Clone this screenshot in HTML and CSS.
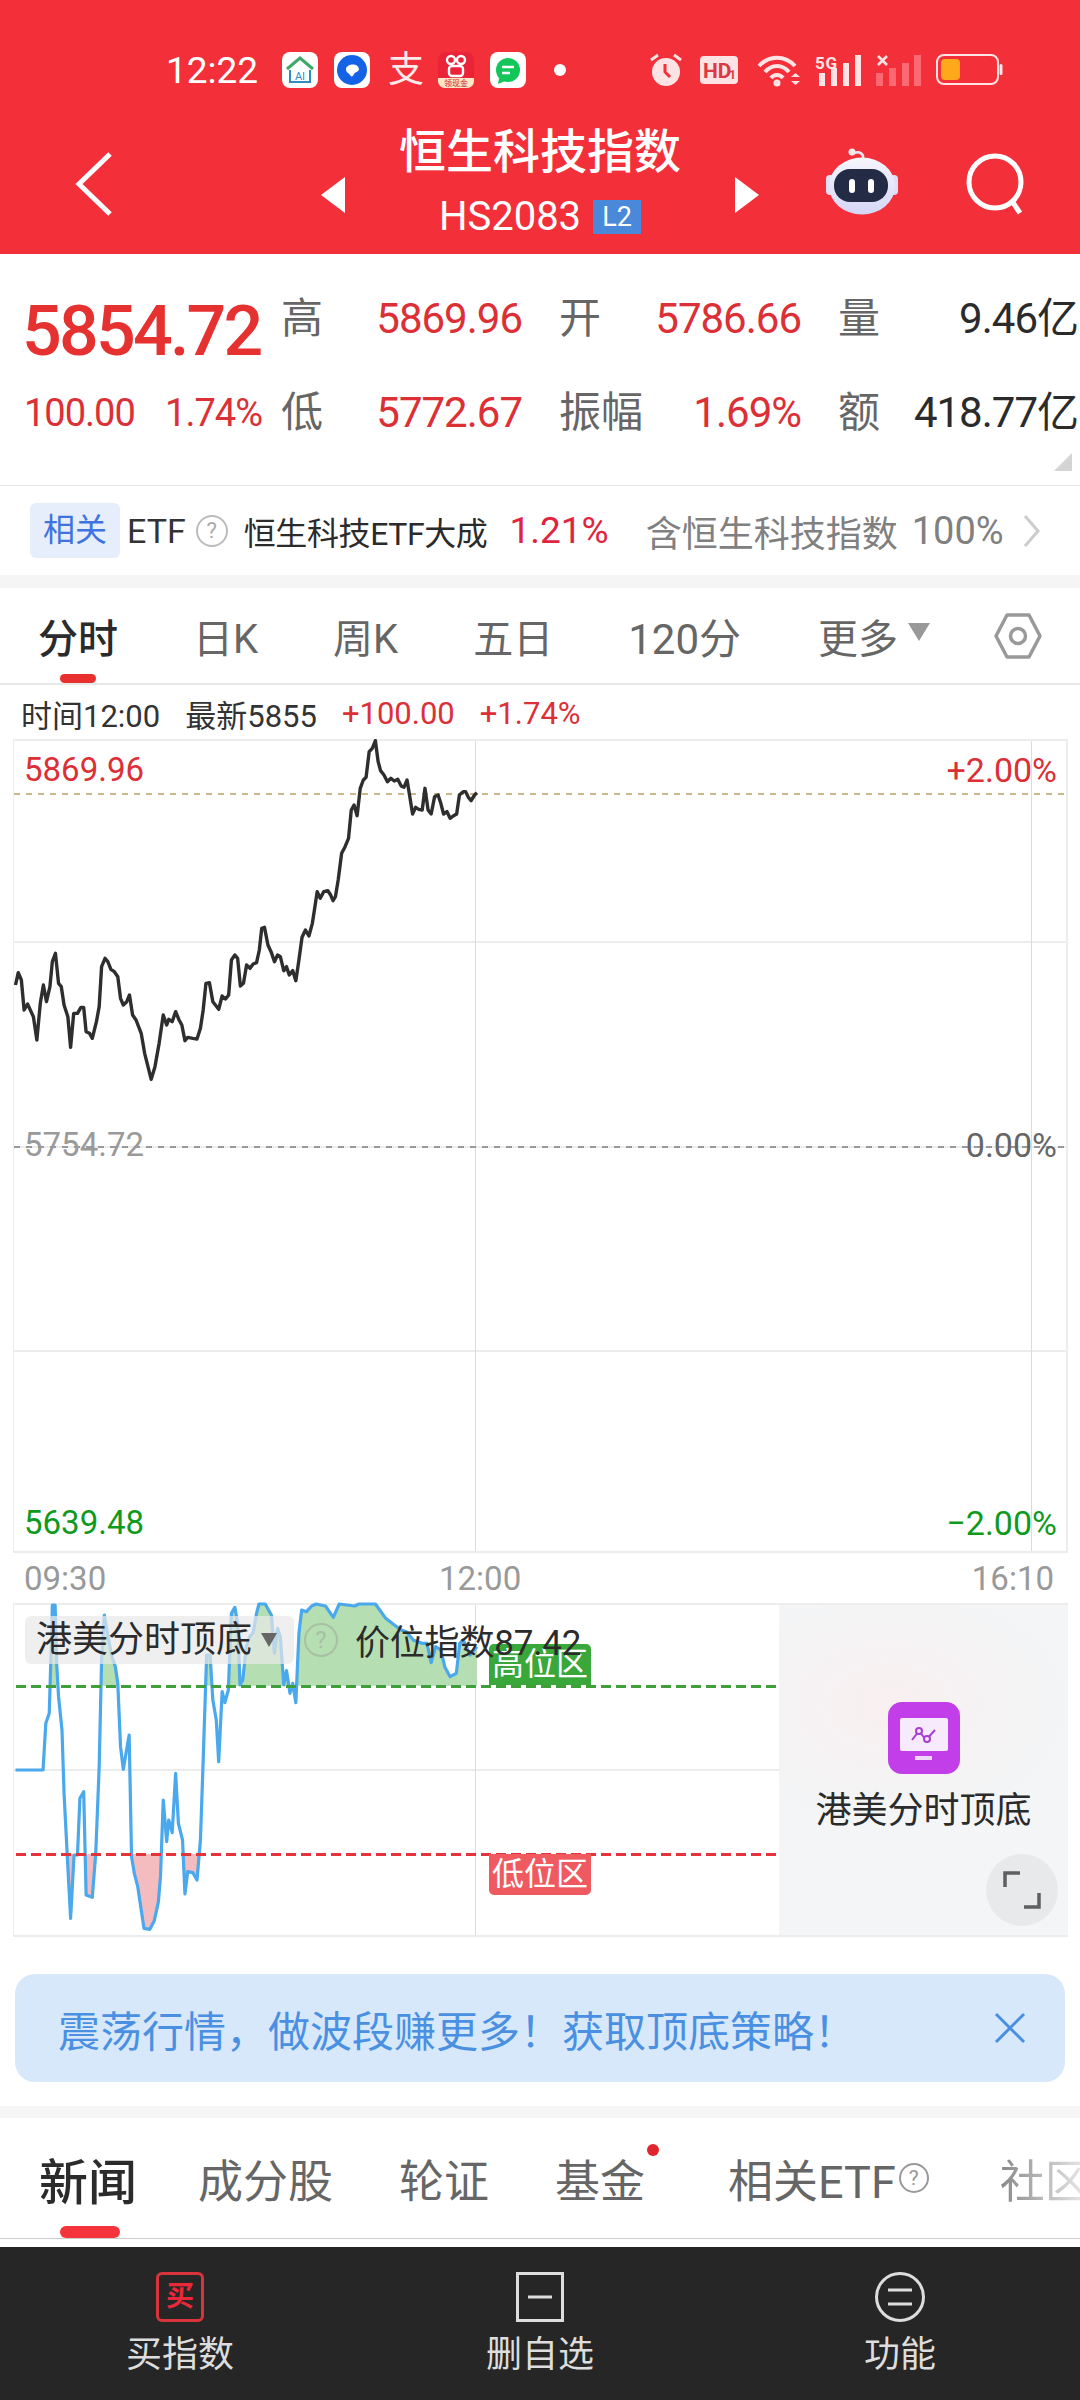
FILE: index.html
```html
<!DOCTYPE html>
<html lang="zh-CN">
<head>
  <meta charset="UTF-8" />
  <meta name="viewport" content="width=device-width, initial-scale=1.0"/>
  <title>恒生科技指数</title>
  <link rel="stylesheet" href="styles.css">
</head>
<body>
  <div class="header">
    <div class="status-bar">
      <span class="status-time">12:22</span>
      <!-- AI home -->
      <svg class="app-icon" width="36" height="36" viewBox="0 0 36 36">
        <rect width="36" height="36" rx="8" fill="#fff"/>
        <path d="M5 17L18 6L31 17" fill="none" stroke="#3fa86b" stroke-width="3"/>
        <path d="M8 18V30H28V18" fill="none" stroke="#2b8fc4" stroke-width="2"/>
        <text x="18" y="28" font-size="11" text-anchor="middle" fill="#2b8fc4" font-family="Roboto">AI</text>
      </svg>
      <!-- Blue browser -->
      <svg class="app-icon" width="36" height="36" viewBox="0 0 36 36">
        <rect width="36" height="36" rx="8" fill="#fff"/>
        <circle cx="18" cy="18" r="15" fill="#1463e6"/>
        <path d="M12 17C12 12 24 10 25 17C25 20 21 20 20 22C19 25 17 25 16 23C15 21 12 21 12 17Z" fill="#fff"/>
      </svg>
      <span class="status-alipay">支</span>
      <!-- Red video app -->
      <svg class="app-icon" width="36" height="36" viewBox="0 0 36 36">
        <rect width="36" height="36" rx="8" fill="#ea2338"/>
        <circle cx="13" cy="8" r="4" fill="none" stroke="#fff" stroke-width="2.4"/>
        <circle cx="23" cy="8" r="4" fill="none" stroke="#fff" stroke-width="2.4"/>
        <rect x="11" y="14" width="14" height="10" rx="3" fill="none" stroke="#fff" stroke-width="2.4"/>
        <path d="M0 26H36V29C36 33 33 36 29 36H7C3 36 0 33 0 29Z" fill="#fde7c4"/>
        <text x="18" y="34" font-size="8" text-anchor="middle" fill="#c7202f" font-family="Noto Sans CJK SC">领现金</text>
      </svg>
      <!-- Green message -->
      <svg class="app-icon" width="36" height="36" viewBox="0 0 36 36">
        <rect width="36" height="36" rx="8" fill="#fff"/>
        <circle cx="18" cy="18" r="12" fill="#13c65a"/>
        <path d="M9 26L8 32L15 29Z" fill="#13c65a"/>
        <path d="M12 15H24M12 21H20" stroke="#fff" stroke-width="2.4"/>
      </svg>
      <span class="status-dot"></span>
      <!-- Alarm -->
      <svg class="status-alarm" width="32" height="34" viewBox="0 0 32 34">
        <circle cx="16" cy="19" r="14" fill="#fde3e3"/>
        <path d="M1 7L8 2M31 7L24 2" stroke="#fde3e3" stroke-width="3"/>
        <path d="M15 11V19L20 24" fill="none" stroke="#f3303a" stroke-width="3"/>
      </svg>
      <svg class="status-hd" width="38" height="28" viewBox="0 0 38 28">
        <rect width="38" height="28" rx="4" fill="#fde3e3"/>
        <text x="3" y="22" font-size="21" font-weight="700" fill="#d93a44" font-family="Roboto">HD</text>
        <text x="29" y="23" font-size="12" font-weight="700" fill="#d93a44" font-family="Roboto">1</text>
      </svg>
      <!-- Wifi -->
      <svg class="status-wifi" width="44" height="34" viewBox="0 0 44 34">
        <path d="M2 13C12 2 28 2 38 13M8 19C15 11 25 11 32 19M14 25C17 21 23 21 26 25" fill="none" stroke="#fde3e3" stroke-width="4"/>
        <circle cx="20" cy="30" r="3.5" fill="#fde3e3"/>
        <path d="M34 24L38.500 20L43 24ZM34 28H43L38.500 32Z" fill="#fde3e3"/>
      </svg>
      <!-- 5G signal -->
      <svg class="status-signal" width="48" height="34" viewBox="0 0 48 34">
        <text x="0" y="16" font-size="17" font-weight="700" fill="#fde3e3" font-family="Roboto" textLength="22">5G</text>
        <rect x="4" y="20" width="6" height="13" fill="#fde3e3"/>
        <rect x="16" y="15" width="6" height="18" fill="#fde3e3"/>
        <rect x="28" y="10" width="6" height="23" fill="#fde3e3"/>
        <rect x="40" y="2" width="6" height="31" fill="#fde3e3"/>
      </svg>
      <!-- No service signal -->
      <svg class="status-signal-off" width="46" height="34" viewBox="0 0 46 34">
        <path d="M2 3L11 12M11 3L2 12" stroke="#fde3e3" stroke-width="2.600"/>
        <rect y="20" width="7" height="13" fill="#fb6a72"/>
        <rect x="13" y="15" width="7" height="18" fill="#fb6a72"/>
        <rect x="26" y="10" width="7" height="23" fill="#fb6a72"/>
        <rect x="38" y="2" width="7" height="31" fill="#fb6a72"/>
      </svg>
      <!-- Battery -->
      <svg class="status-battery" width="67" height="32" viewBox="0 0 67 32">
        <rect x="1" y="1" width="61" height="29" rx="7" fill="none" stroke="#fde3e3" stroke-width="2"/>
        <rect x="5" y="5" width="19" height="21" rx="4" fill="#ffa81c"/>
        <rect x="63.500" y="10" width="3" height="11" rx="1.500" fill="#fde3e3"/>
      </svg>
    </div>

    <div class="nav-bar">
      <svg class="nav-back" width="40" height="64" viewBox="0 0 40 64">
        <path d="M36 2L5 32L36 62" fill="none" stroke="#fff" stroke-width="5"/>
      </svg>
      <span class="nav-arrow nav-arrow-left"></span>
      <div class="nav-title">
        <div class="nav-name">恒生科技指数</div>
        <div class="nav-code">HS2083<span class="l2-badge">L2</span></div>
      </div>
      <span class="nav-arrow nav-arrow-right"></span>
      <!-- Robot -->
      <svg class="nav-robot" width="72" height="68" viewBox="0 0 72 68">
        <defs>
          <linearGradient id="robot-shell" x1="0" y1="0" x2="0" y2="1">
            <stop offset="0" stop-color="#f6f6fd"/>
            <stop offset="1" stop-color="#d5d6f5"/>
          </linearGradient>
        </defs>
        <path d="M28 5C34 3 38 6 37 11" fill="none" stroke="#e6e8f6" stroke-width="2.500"/>
        <circle cx="26" cy="4" r="3.500" fill="#f4e9e6"/>
        <rect x="0" y="27" width="8" height="20" rx="4" fill="#dfe0f5"/>
        <rect x="64" y="27" width="8" height="20" rx="4" fill="#dfe0f5"/>
        <ellipse cx="36" cy="38" rx="33" ry="28.500" fill="url(#robot-shell)"/>
        <rect x="8" y="21" width="54" height="33" rx="16" fill="#232b45"/>
        <rect x="23" y="31" width="6" height="14" rx="3" fill="#fff"/>
        <rect x="42" y="31" width="6" height="14" rx="3" fill="#fff"/>
      </svg>
      <svg class="nav-search" width="62" height="62" viewBox="0 0 62 62">
        <circle cx="29" cy="29" r="26" fill="none" stroke="#fff" stroke-width="5"/>
        <path d="M46 48L54 60" stroke="#fff" stroke-width="5"/>
      </svg>
    </div>
  </div>

  <div class="quote">
    <div class="quote-main">
      <div class="quote-price">5854.72</div>
      <div class="quote-change"><span>100.00</span><span>1.74%</span></div>
    </div>
    <div class="quote-grid">
      <div class="quote-cell"><span class="quote-label">高</span><span class="up">5869.96</span></div>
      <div class="quote-cell"><span class="quote-label">开</span><span class="up">5786.66</span></div>
      <div class="quote-cell"><span class="quote-label">量</span><span class="dark">9.46亿</span></div>
      <div class="quote-cell"><span class="quote-label">低</span><span class="up">5772.67</span></div>
      <div class="quote-cell"><span class="quote-label">振幅</span><span class="up">1.69%</span></div>
      <div class="quote-cell"><span class="quote-label">额</span><span class="dark">418.77亿</span></div>
    </div>
    <span class="quote-corner"></span>
  </div>

  <div class="etf-row">
    <span class="etf-chip">相关</span>
    <span class="etf-title">ETF</span>
    <span class="help-icon etf-help">?</span>
    <span class="etf-name">恒生科技ETF大成</span>
    <span class="etf-rate">1.21%</span>
    <span class="etf-hold">含恒生科技指数</span>
    <span class="etf-percent">100%</span>
    <svg class="etf-chevron" width="18" height="34" viewBox="0 0 18 34">
      <path d="M2 2L15 17L2 32" fill="none" stroke="#ccc" stroke-width="3"/>
    </svg>
  </div>

  <div class="band"></div>

  <div class="chart-tabs">
    <span class="chart-tab chart-tab-active">分时</span>
    <span class="chart-tab">日K</span>
    <span class="chart-tab">周K</span>
    <span class="chart-tab">五日</span>
    <span class="chart-tab chart-tab-wide">120分</span>
    <span class="chart-tab chart-tab-more">更多<i class="more-arrow"></i></span>
    <svg class="chart-settings" width="50" height="48" viewBox="0 0 50 48">
      <path d="M14 3H36L47 24L36 45H14L3 24Z" fill="none" stroke="#999" stroke-width="3.500" stroke-linejoin="round"/>
      <circle cx="25" cy="24" r="7.500" fill="none" stroke="#999" stroke-width="3.500"/>
    </svg>
  </div>

  <div class="info-row">
    <span>时间12:00</span>
    <span>最新5855</span>
    <span class="up">+100.00</span>
    <span class="up">+1.74%</span>
  </div>

  <div class="chart">
    <div class="grid-h grid-h-1"></div>
    <div class="grid-h grid-h-2"></div>
    <div class="grid-h grid-h-3"></div>
    <div class="grid-v grid-v-1"></div>
    <div class="grid-v grid-v-2"></div>
    <div class="dash dash-high"></div>
    <div class="dash dash-zero"></div>

    <svg class="price-line" viewBox="0 0 1568 1380" preserveAspectRatio="none">
      <polyline fill="none" stroke="#2e2e2e" stroke-width="3.400" stroke-linejoin="round" vector-effect="non-scaling-stroke" points="45,855 53,818 62,840 70,930 80,912 97,950 107,1020 117,910 126,855 135,905 145,860 152,785 161,760 170,850 178,860 186,915 197,950 205,1042 214,940 225,940 235,922 243,922 250,995 260,1000 268,1015 280,965 288,920 295,800 305,775 313,785 322,808 332,815 342,830 350,895 358,915 368,905 376,885 385,945 395,960 410,1000 420,1060 439,1138 450,1100 462,1030 474,945 484,975 490,958 500,965 510,935 520,960 528,975 537,1022 545,1012 560,1015 572,1017 582,985 590,930 598,850 608,848 618,905 635,928 645,888 655,897 664,885 672,780 682,765 690,775 698,858 707,850 716,795 726,805 735,792 745,788 753,750 760,685 768,682 778,735 787,755 797,785 806,765 814,770 824,812 832,800 840,825 850,812 859,842 868,780 877,712 887,690 897,708 907,670 913,630 921,575 930,595 940,575 952,572 960,585 967,602 974,590 982,540 992,460 1002,440 1012,415 1020,330 1028,315 1037,347 1046,265 1055,240 1063,232 1072,155 1081,145 1090,122 1098,185 1105,212 1115,225 1125,245 1135,235 1145,243 1155,238 1165,258 1173,262 1182,240 1190,290 1198,342 1207,322 1216,328 1226,330 1234,265 1243,330 1252,342 1262,290 1272,285 1280,310 1288,342 1298,335 1307,355 1316,348 1326,342 1334,285 1345,275 1352,275 1360,292 1368,302 1378,285 1385,278"/>
    </svg>

    <span class="chart-label chart-left label-high up">5869.96</span>
    <span class="chart-label chart-right label-high up">+2.00%</span>
    <span class="chart-label chart-left label-zero muted">5754.72</span>
    <span class="chart-label chart-right label-zero dim">0.00%</span>
    <span class="chart-label chart-left label-low down">5639.48</span>
    <span class="chart-label chart-right label-low down">−2.00%</span>
  </div>

  <div class="time-row">
    <span>09:30</span>
    <span class="time-mid">12:00</span>
    <span class="time-end">16:10</span>
  </div>

  <div class="osc">
    <div class="grid-h osc-mid"></div>
    <div class="grid-v osc-v"></div>

    <svg class="osc-line" viewBox="0 0 1568 1350" preserveAspectRatio="none">
      <defs>
        <clipPath id="above-high"><rect x="0" y="300" width="1568" height="257"/></clipPath>
      </defs>
      <polygon clip-path="url(#above-high)" fill="#b5dfb2" points="143,1300 143,640 150,400 152,315 160,315 165,500 170,590 180,690 186,880 197,1100 205,1255 215,1065 225,1065 232,895 243,875 250,1185 268,1192 278,1060 288,800 295,480 303,345 312,400 325,470 335,500 342,550 350,740 358,808 375,705 382,1070 390,1120 400,1160 418,1285 435,1288 448,1262 460,1205 466,1130 474,900 484,1025 490,960 500,998 510,820 518,970 530,1020 537,1182 545,1115 560,1118 572,1140 582,1020 590,780 600,465 610,465 618,600 628,660 635,785 645,575 653,608 663,570 672,340 682,322 690,370 697,555 705,540 715,440 725,410 735,398 745,340 752,312 770,312 788,345 797,460 806,385 814,410 824,555 832,512 842,580 850,550 859,608 868,400 876,330 890,335 905,318 918,312 945,318 968,352 985,312 1030,318 1042,312 1090,312 1120,355 1145,375 1165,390 1180,395 1200,420 1225,430 1240,430 1252,488 1265,440 1280,450 1292,502 1307,530 1325,520 1335,430 1345,420 1365,465 1385,440 1385,1300"/>
      <g fill="#f5bcc0">
        <polygon points="195,1062 205,1255 215,1062"/>
        <polygon points="247,1062 250,1185 268,1192 278,1062"/>
        <polygon points="382,1062 382,1070 390,1120 400,1160 418,1285 435,1288 448,1262 460,1205 466,1130 470,1062"/>
        <polygon points="533,1062 537,1182 545,1115 560,1118 572,1140 580,1062"/>
      </g>
      <polyline fill="none" stroke="#4aa8ec" stroke-width="3.200" stroke-linejoin="round" vector-effect="non-scaling-stroke" points="45,810 125,810 133,670 143,640 150,400 152,315 160,315 165,500 170,590 180,690 186,880 197,1100 205,1255 215,1065 225,1065 232,895 243,875 250,1185 268,1192 278,1060 288,800 295,480 303,345 312,400 325,470 335,500 342,550 350,740 358,808 375,705 382,1070 390,1120 400,1160 418,1285 435,1288 448,1262 460,1205 466,1130 474,900 484,1025 490,960 500,998 510,820 518,970 530,1020 537,1182 545,1115 560,1118 572,1140 582,1020 590,780 600,465 610,465 618,600 628,660 635,785 645,575 653,608 663,570 672,340 682,322 690,370 697,555 705,540 715,440 725,410 735,398 745,340 752,312 770,312 788,345 797,460 806,385 814,410 824,555 832,512 842,580 850,550 859,608 868,400 876,330 890,335 905,318 918,312 945,318 968,352 985,312 1030,318 1042,312 1090,312 1120,355 1145,375 1165,390 1180,395 1200,420 1225,430 1240,430 1252,488 1265,440 1280,450 1292,502 1307,530 1325,520 1335,430 1345,420 1365,465 1385,440"/>
    </svg>

    <div class="level level-high"></div>
    <div class="level level-low"></div>
    <span class="zone zone-high">高位区</span>
    <span class="zone zone-low">低位区</span>

    <div class="osc-legend">
      <span class="osc-chip">港美分时顶底<i class="chip-arrow"></i></span>
      <span class="help-icon osc-help">?</span>
      <span class="osc-value">价位指数87.42</span>
    </div>

    <div class="osc-panel">
      <svg class="panel-icon" width="72" height="72" viewBox="0 0 72 72">
        <rect width="72" height="72" rx="14" fill="#c23ee8"/>
        <rect x="12" y="16" width="48" height="33" rx="2" fill="#f6eafc"/>
        <rect x="27" y="54" width="17" height="4" fill="#f0d8fa"/>
        <path d="M24 38L31 29L38 38L47 28" fill="none" stroke="#a83fd0" stroke-width="2"/>
        <circle cx="31" cy="29" r="3" fill="#f6eafc" stroke="#a83fd0" stroke-width="2"/>
        <circle cx="39" cy="37" r="3" fill="#f6eafc" stroke="#a83fd0" stroke-width="2"/>
      </svg>
      <div class="panel-title">港美分时顶底</div>
      <span class="panel-expand">
        <svg width="38" height="38" viewBox="0 0 38 38">
          <path d="M2 16V2H17M36 22V36H21" fill="none" stroke="#5f5f5f" stroke-width="3.500"/>
        </svg>
      </span>
    </div>
  </div>

  <div class="banner">
    <span class="banner-text">震荡行情，做波段赚更多！获取顶底策略！</span>
    <svg width="32" height="32" viewBox="0 0 32 32">
      <path d="M2 2L30 30M30 2L2 30" stroke="#4a90e2" stroke-width="3"/>
    </svg>
  </div>

  <div class="band band-news"></div>

  <div class="news-tabs">
    <span class="news-tab news-tab-active">新闻</span>
    <span class="news-tab">成分股</span>
    <span class="news-tab">轮证</span>
    <span class="news-tab news-tab-dot">基金</span>
    <span class="news-tab news-tab-etf">相关ETF<span class="help-icon news-help">?</span></span>
    <span class="news-tab news-tab-fade">社区</span>
  </div>

  <div class="toolbar">
    <div class="tool">
      <span class="tool-icon tool-buy">买</span>
      <span class="tool-label">买指数</span>
    </div>
    <div class="tool">
      <svg class="tool-svg" width="48" height="50" viewBox="0 0 48 50">
        <rect x="1.500" y="1.500" width="45" height="47" fill="none" stroke="#ddd" stroke-width="3"/>
        <path d="M12 25H36" stroke="#ddd" stroke-width="3"/>
      </svg>
      <span class="tool-label">删自选</span>
    </div>
    <div class="tool">
      <svg class="tool-svg" width="50" height="50" viewBox="0 0 50 50">
        <circle cx="25" cy="25" r="23.500" fill="none" stroke="#ddd" stroke-width="3"/>
        <path d="M13 18H37M13 32H37" stroke="#ddd" stroke-width="3"/>
      </svg>
      <span class="tool-label">功能</span>
    </div>
  </div>
</body>
</html>
```

FILE: styles.css
```css
* {
    margin: 0;
    padding: 0;
    box-sizing: border-box;
    font-family: Roboto, 'Noto Sans CJK SC', sans-serif;
}

body {
    width: 1080px;
    height: 2400px;
    overflow: hidden;
    background-color: #fff;
    color: #333;
    display: flex;
    flex-direction: column;
}

.up { color: #dc2f36; }
.down { color: #0f9a1e; }
.dark { color: #2b2b2b; }
.muted { color: #9a9a9a; }
.dim { color: #666; }

/* header */
.header {
    height: 254px;
    background-color: #f3303a;
    color: #fff;
}

.status-bar {
    height: 110px;
    padding: 30px 0 0 166px;
    display: flex;
    align-items: center;
}

.status-time {
    font-size: 37px;
    width: 116px;
    color: #fff;
}

.app-icon {
    margin-right: 16px;
}

.status-alipay {
    font-size: 36px;
    line-height: 36px;
    color: #fdeaea;
    margin: 0 16px 0 2px;
    width: 34px;
}

.status-dot {
    width: 12px;
    height: 12px;
    border-radius: 50%;
    background-color: #fff;
    margin-left: 12px;
}

.status-alarm { margin-left: 84px; }
.status-hd { margin-left: 18px; }
.status-wifi { margin-left: 19px; }
.status-signal { margin-left: 14px; }
.status-signal-off { margin-left: 13px; }
.status-battery { margin-left: 14px; }

.nav-bar {
    height: 144px;
    display: flex;
    align-items: center;
    padding-left: 74px;
    position: relative;
}

.nav-back {
    margin-top: 4px;
}

.nav-arrow {
    width: 0;
    height: 0;
    border-top: 18px solid transparent;
    border-bottom: 18px solid transparent;
    margin-top: 26px;
}

.nav-arrow-left {
    border-right: 24px solid #fff;
    margin-left: 207px;
}

.nav-arrow-right {
    border-left: 24px solid #fff;
}

.nav-title {
    width: 390px;
    display: flex;
    flex-direction: column;
    align-items: center;
}

.nav-name {
    font-size: 47px;
    line-height: 60px;
    font-weight: 500;
}

.nav-code {
    font-size: 40px;
    line-height: 50px;
    margin-top: 10px;
    display: flex;
    align-items: center;
}

.l2-badge {
    width: 48px;
    height: 34px;
    margin-left: 12px;
    background-color: #4a88da;
    font-size: 27px;
    line-height: 34px;
    text-align: center;
}

.nav-robot {
    margin: 0 0 0 67px;
}

.nav-search {
    margin-left: 68px;
    margin-top: 4px;
}

/* quote */
.quote {
    height: 232px;
    border-bottom: 1px solid #e6e6e6;
    display: flex;
    position: relative;
}

.quote-main {
    width: 281px;
    padding: 38px 0 0 22px;
}

.quote-price {
    font-size: 70px;
    line-height: 78px;
    font-weight: 500;
    letter-spacing: -2.800px;
    color: #e5312f;
}

.quote-change {
    margin-top: 17px;
    width: 240px;
    padding-left: 2px;
    display: flex;
    justify-content: space-between;
    font-size: 38px;
    line-height: 52px;
    letter-spacing: -1px;
    color: #dc2f36;
}

.quote-grid {
    padding-top: 39px;
    display: grid;
    grid-template-columns: 241px 242px 240px;
    grid-auto-rows: 52px;
    column-gap: 37px;
    row-gap: 42px;
}

.quote-cell {
    display: flex;
    justify-content: space-between;
    font-size: 42px;
    line-height: 52px;
    letter-spacing: -1px;
}

.quote-label {
    font-size: 42px;
    color: #666;
    letter-spacing: 0;
}

.quote-corner {
    position: absolute;
    right: 8px;
    bottom: 14px;
    width: 18px;
    height: 18px;
    background-color: #d4d4d4;
    clip-path: polygon(100% 0, 100% 100%, 0 100%);
}

/* related etf */
.etf-row {
    height: 89px;
    padding-left: 30px;
    display: flex;
    align-items: center;
}

.etf-chip {
    width: 90px;
    height: 55px;
    border-radius: 6px;
    background-color: #e6eefb;
    color: #3f74e0;
    font-size: 32px;
    line-height: 55px;
    text-align: center;
}

.etf-title {
    margin-left: 7px;
    font-size: 34px;
    color: #333;
}

.help-icon {
    display: inline-block;
    border-radius: 50%;
    border: 2px solid #bbb;
    color: #aaa;
    text-align: center;
}

.etf-help {
    width: 32px;
    height: 32px;
    margin-left: 10px;
    font-size: 22px;
    line-height: 28px;
}

.etf-name {
    margin-left: 16px;
    font-size: 32px;
    letter-spacing: -0.400px;
    color: #2b2b2b;
}

.etf-rate {
    margin-left: 22px;
    font-size: 37px;
    color: #e0243f;
}

.etf-hold {
    margin-left: 37px;
    font-size: 36px;
    color: #808080;
}

.etf-percent {
    margin-left: 14px;
    font-size: 38px;
    color: #808080;
}

.etf-chevron {
    margin-left: 19px;
}

.band {
    height: 13px;
    flex-shrink: 0;
    background-color: #f5f5f5;
}

/* chart tabs */
.chart-tabs {
    height: 97px;
    padding-left: 38px;
    border-bottom: 2px solid #e8e8e8;
    display: flex;
    align-items: center;
    gap: 75px;
    position: relative;
    white-space: nowrap;
}

.chart-tab {
    flex-shrink: 0;
    font-size: 40px;
    color: #666;
    display: flex;
    align-items: center;
}

.chart-tab-wide {
    font-size: 42px;
}

.chart-tab-more {
    margin-left: 2px;
}

.chart-tab-active {
    color: #2b2b2b;
    font-weight: 500;
    position: relative;
}

.chart-tab-active::after {
    content: "";
    position: absolute;
    left: 22px;
    bottom: -18px;
    width: 36px;
    height: 9px;
    border-radius: 5px;
    background-color: #e8302f;
}

.more-arrow {
    width: 0;
    height: 0;
    margin: 0 0 8px 10px;
    border-left: 11px solid transparent;
    border-right: 11px solid transparent;
    border-top: 18px solid #999;
}

.chart-settings {
    margin-left: -12px;
    flex-shrink: 0;
}

/* info row */
.info-row {
    height: 54px;
    padding: 3px 0 0 21px;
    display: flex;
    align-items: center;
    gap: 25px;
    font-size: 31px;
    color: #333;
}

/* price chart */
.chart {
    position: relative;
    flex-shrink: 0;
    width: 1055px;
    height: 814px;
    margin-left: 13px;
    border: 2px solid #ededed;
    border-width: 2px 2px 2px 1px;
}

.grid-h {
    position: absolute;
    left: 0;
    right: 0;
    height: 2px;
    background-color: #ececec;
}

.grid-h-1 { top: 200px; }
.grid-h-2 { top: 405px; }
.grid-h-3 { top: 609px; }

.grid-v {
    position: absolute;
    top: 0;
    bottom: 0;
    width: 1px;
    background-color: #dcdcdc;
}

.grid-v-1 { left: 461px; }
.grid-v-2 { left: 1017px; }

.dash {
    position: absolute;
    left: 0;
    right: 0;
    height: 2px;
}

.dash-high {
    top: 52px;
    background: repeating-linear-gradient(90deg, #c9b98a 0 6px, transparent 6px 12px);
}

.dash-zero {
    top: 405px;
    background: repeating-linear-gradient(90deg, #999 0 6px, transparent 6px 12px);
}

.price-line {
    position: absolute;
    left: -14px;
    top: -41px;
    width: 540px;
    height: 460px;
}

.chart-label {
    position: absolute;
    font-size: 33px;
    line-height: 40px;
}

.chart-left { left: 10px; }
.chart-right { right: 9px; font-size: 34px; }
.label-high { top: 9px; }
.label-zero { top: 384px; }
.label-low { top: 762px; }

.time-row {
    height: 50px;
    flex-shrink: 0;
    padding: 0 26px 0 24px;
    position: relative;
    display: flex;
    justify-content: space-between;
    align-items: center;
    font-size: 33px;
    color: #999;
}

.time-mid {
    position: absolute;
    left: 439px;
}

/* oscillator */
.osc {
    position: relative;
    flex-shrink: 0;
    width: 1055px;
    height: 334px;
    margin-left: 13px;
    border: 2px solid #ededed;
    border-width: 2px 0 2px 1px;
}

.osc-mid { top: 164px; }
.osc-v { left: 461px; }

.osc-line {
    position: absolute;
    left: -14px;
    top: -105px;
    width: 540px;
    height: 450px;
}

.level {
    position: absolute;
    left: 2px;
    width: 761px;
    height: 3px;
}

.level-high {
    top: 80px;
    background: repeating-linear-gradient(90deg, #3f9f3a 0 10px, transparent 10px 15px);
}

.level-low {
    top: 248px;
    background: repeating-linear-gradient(90deg, #e5333c 0 10px, transparent 10px 15px);
}

.zone {
    position: absolute;
    left: 475px;
    width: 102px;
    height: 41px;
    color: #fff;
    font-size: 32px;
    line-height: 41px;
    text-align: center;
}

.zone-high {
    top: 39px;
    background-color: #3aa73a;
    border-radius: 5px 5px 0 0;
}

.zone-low {
    top: 249px;
    background-color: #ee5a5f;
    border-radius: 0 0 5px 5px;
}

.osc-legend {
    position: absolute;
    left: 11px;
    top: 9px;
    display: flex;
    align-items: center;
    font-size: 36px;
    color: #2b2b2b;
}

.osc-chip {
    width: 269px;
    height: 48px;
    padding-left: 11px;
    border-radius: 6px;
    background-color: rgba(232, 232, 232, 0.7);
    line-height: 48px;
    display: flex;
    align-items: center;
}

.chip-arrow {
    width: 0;
    height: 0;
    margin-left: 9px;
    border-left: 8px solid transparent;
    border-right: 8px solid transparent;
    border-top: 14px solid #666;
}

.osc-help {
    width: 34px;
    height: 34px;
    margin-left: 10px;
    border-color: #a8bfa4;
    color: #a8bfa4;
    font-size: 24px;
    line-height: 30px;
}

.osc-value {
    margin-left: 17px;
    font-size: 35px;
    letter-spacing: -0.200px;
    white-space: nowrap;
}

.osc-panel {
    position: absolute;
    left: 765px;
    top: 0;
    bottom: 0;
    width: 289px;
    padding-top: 97px;
    display: flex;
    flex-direction: column;
    align-items: center;
    background:
        radial-gradient(ellipse 180px 120px at 110px 100px, #f8eff0 0, rgba(248, 239, 240, 0) 100%),
        #f3f5f6;
}

.panel-title {
    margin-top: 12px;
    font-size: 36px;
    line-height: 50px;
    color: #2b2b2b;
}

.panel-expand {
    position: absolute;
    right: 10px;
    bottom: 9px;
    width: 72px;
    height: 72px;
    border-radius: 50%;
    background-color: #e8e9ea;
    display: flex;
    align-items: center;
    justify-content: center;
}

/* banner */
.banner {
    flex-shrink: 0;
    height: 108px;
    margin: 37px 15px 24px;
    padding: 0 39px 0 43px;
    border-radius: 20px;
    background-color: #d8e8fb;
    display: flex;
    align-items: center;
    justify-content: space-between;
}

.banner-text {
    font-size: 42px;
    color: #4a90e2;
}

.band-news {
    height: 12px;
}

/* news tabs */
.news-tabs {
    flex-shrink: 0;
    height: 121px;
    padding-left: 39px;
    border-bottom: 1px solid #ccc;
    display: flex;
    align-items: center;
    overflow: hidden;
    white-space: nowrap;
    font-size: 45px;
    color: #666;
    margin-bottom: 8px;
}

.news-tab {
    position: relative;
    flex-shrink: 0;
    margin-right: 66px;
}

.news-tab-active {
    font-size: 49px;
    font-weight: 500;
    color: #2b2b2b;
    margin-right: 61px;
}

.news-tab-active::after {
    content: "";
    position: absolute;
    left: 21px;
    bottom: -24px;
    width: 60px;
    height: 12px;
    border-radius: 6px;
    background-color: #f5333a;
}

.news-tab-dot::after {
    content: "";
    position: absolute;
    right: -14px;
    top: -2px;
    width: 12px;
    height: 12px;
    border-radius: 50%;
    background-color: #e0262d;
}

.news-tab-etf {
    display: flex;
    align-items: center;
    margin-left: 17px;
    margin-right: 71px;
}

.news-help {
    width: 30px;
    height: 30px;
    margin-left: 3px;
    border-color: #999;
    color: #999;
    font-size: 21px;
    line-height: 26px;
}

.news-tab-fade {
    background: linear-gradient(90deg, #888 0, #eee 100%);
    -webkit-background-clip: text;
    background-clip: text;
    color: transparent;
}

/* bottom toolbar */
.toolbar {
    flex: 1;
    background-color: #262626;
    padding: 25px 0 0 0;
    display: grid;
    grid-template-columns: 360px 360px 360px;
}

.tool {
    display: flex;
    flex-direction: column;
    align-items: center;
}

.tool-icon {
    width: 48px;
    height: 50px;
}

.tool-buy {
    border: 3px solid #d9343c;
    border-radius: 6px;
    color: #e8293a;
    font-size: 28px;
    font-weight: 700;
    line-height: 44px;
    text-align: center;
}

.tool-label {
    margin-top: 8px;
    font-size: 36px;
    line-height: 50px;
    color: #ddd;
}
```
